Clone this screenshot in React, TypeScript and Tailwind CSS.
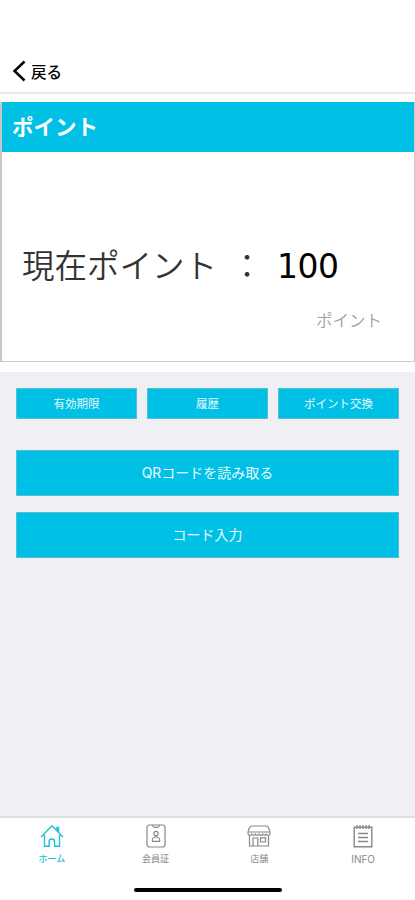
import React from "react";

interface Tab {
    label: string;
    icon: React.ReactNode;
    active?: boolean;
}

const HomeIcon = () => (
    <svg width="24" height="24" viewBox="0 0 24 24" fill="none" stroke="currentColor" strokeWidth="1.4">
        <path d="M1 13 12 1.8 23 13M17 6.500V3.500h1.500V8M4.500 11v11.300h4.600v-4.600a2.700 2.700 0 0 1 5.400 0v4.600h5V11" />
    </svg>
);

const MemberIcon = () => (
    <svg width="20" height="24" viewBox="0 0 20 24" fill="none" stroke="currentColor" strokeWidth="1.2">
        <rect x="1" y="1" width="18" height="22" rx="2.5" />
        <path d="M6.5 1.2c.3 1.8 1 2.2 2 2.2h3c1 0 1.7-.4 2-2.2" />
        <circle cx="10" cy="9.5" r="2.2" />
        <path d="M6.300 17v-1.500c0-1 .8-1.700 2-2l1-.5v-1.300M13.700 17v-1.500c0-1-.8-1.700-2-2l-1-.5v-1.300M6 17.300h8" />
    </svg>
);

const ShopIcon = () => (
    <svg width="24" height="22" viewBox="0 0 24 22" fill="none" stroke="currentColor" strokeWidth="1.2">
        <path d="M5 1h14c1.500 0 2.200.8 2.700 2L23 7v1.500a1.800 1.800 0 0 1-3.700 0 1.800 1.800 0 0 1-3.600 0 1.800 1.800 0 0 1-3.700 0 1.800 1.800 0 0 1-3.700 0 1.800 1.800 0 0 1-3.600 0 1.800 1.800 0 0 1-3.700 0V7l1.300-4C2.800 1.800 3.500 1 5 1z" />
        <path d="M1.500 7h21M2.500 10.500V21h19V10.500M6 21v-8h4.800v8M13.500 12.800h5V17h-5z" />
    </svg>
);

const InfoIcon = () => (
    <svg width="20" height="24" viewBox="0 0 20 24" fill="none" stroke="currentColor" strokeWidth="1.4">
        <path d="M1.200 3.200h17.600v19.600H1.200z" />
        <path d="M4 1v4M7 1v4M10 1v4M13 1v4M16 1v4M5 9.500h10M5 13.500h10M5 17.500h10" />
    </svg>
);

const TABS: Tab[] = [
    { label: "ホーム", icon: <HomeIcon />, active: true },
    { label: "会員証", icon: <MemberIcon /> },
    { label: "店舗", icon: <ShopIcon /> },
    { label: "INFO", icon: <InfoIcon /> },
];

const SHORTCUTS = ["有効期限", "履歴", "ポイント交換"];

const ActionButton = ({ label }: { label: string }) => (
    <button className="h-[46px] w-full border border-[#55bdd6] bg-[#00c0e6] pb-0.5 font-['Inter','Noto_Sans_CJK_JP',sans-serif] text-[14px] text-white/90">
        {label}
    </button>
);

export default function App() {
    return (
        <div className="flex h-[900px] w-[415px] flex-col overflow-hidden bg-white font-['Noto_Sans_CJK_JP',sans-serif]">
            <header className="flex h-[94px] shrink-0 items-end border-b-2 border-[#e9e9e9] pb-[9px] pl-3">
                <button className="flex items-center gap-[5px] text-[15.5px] leading-6 font-medium text-black">
                    <svg width="14" height="22" viewBox="0 0 14 22" fill="none" stroke="currentColor" strokeWidth="2.5">
                        <path d="M12.5 1.5 2.5 11l10 9.5" />
                    </svg>
                    戻る
                </button>
            </header>

            {/* Point balance */}
            <section className="mt-2 flex h-[260px] shrink-0 flex-col border-r border-b border-l-2 border-[#c9c9c9]">
                <h1 className="flex h-[50px] shrink-0 items-center bg-[#00c0e6] pb-0.5 pl-[10px] text-[21.5px] font-bold text-white">
                    ポイント
                </h1>
                <div className="mt-[88px] flex h-12 items-center pl-5 text-[32.5px] leading-[48px] font-[350] text-[#333]">
                    <span>現在ポイント</span>
                    <span className="w-[60px] text-center">：</span>
                    <span className="pt-[5px] font-['DejaVu_Sans',sans-serif] text-[33px] font-normal tracking-[-0.5px] text-black">100</span>
                </div>
                <p className="mt-5 pr-8 text-right text-[16.5px] leading-6 font-[350] text-[#a0a0a0]">ポイント</p>
            </section>

            <main className="mt-[10px] flex-1 bg-[#efeff4] px-4 pt-4">
                <div className="grid grid-cols-3 gap-[10px]">
                    {SHORTCUTS.map(label => (
                        <button key={label} className="h-[31px] border border-[#55bdd6] bg-[#00c0e6] text-[11.5px] text-white/90">
                            {label}
                        </button>
                    ))}
                </div>
                <div className="mt-[31px] flex flex-col gap-4">
                    <ActionButton label="QRコードを読み取る" />
                    <ActionButton label="コード入力" />
                </div>
            </main>

            <nav className="grid h-[84px] shrink-0 grid-cols-4 border-t-2 border-[#e0e0e2] pt-[6px]">
                {TABS.map(tab => (
                    <div
                        key={tab.label}
                        className={`flex flex-col items-center text-[9px] leading-3 ${tab.active ? "font-medium text-[#20bfd8]" : "text-[#888]"}`}
                    >
                        <div className="flex h-6 items-center">{tab.icon}</div>
                        <span className={`mt-[5px] ${tab.label === "INFO" ? "font-['Inter',sans-serif] text-[10px]" : ""}`}>{tab.label}</span>
                    </div>
                ))}
                <div className="col-span-4 mb-2 h-1 w-[148px] self-end justify-self-center rounded-full bg-black" />
            </nav>
        </div>
    );
}
